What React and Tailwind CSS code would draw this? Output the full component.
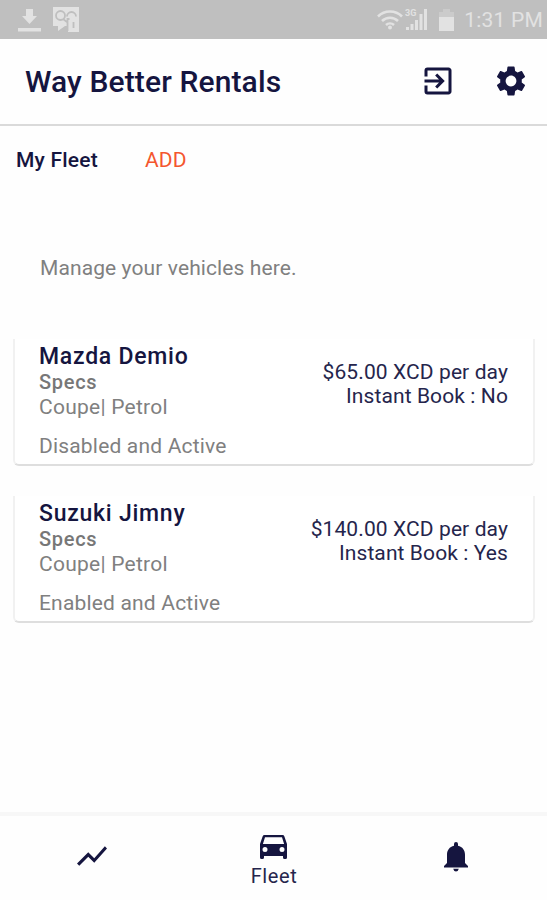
import { MdExitToApp, MdSettings, MdShowChart } from "react-icons/md";

const vehicles = [
  { name: "Mazda Demio", specs: "Coupe| Petrol", status: "Disabled and Active", price: "$65.00 XCD per day", instant: "No" },
  { name: "Suzuki Jimny", specs: "Coupe| Petrol", status: "Enabled and Active", price: "$140.00 XCD per day", instant: "Yes" },
];

function StatusBar() {
  return (
    <div className="flex h-[39px] shrink-0 items-center bg-[#bfbfbf] pl-[18px] pr-[4px] text-[#e2e2e2]">
      <svg className="h-6 w-[23px]" viewBox="0 0 23 24" fill="currentColor">
        <path d="M8 1h7v7h4l-7.500 8L4 8h4zM0 20h23v3.500H0z" />
      </svg>
      <svg className="ml-3 h-[25px] w-[26px]" viewBox="0 0 26 25" fill="currentColor">
        <path d="M0 0h26v25H15v-6h-3l-7 5v-5H0z" />
        <g fill="none" stroke="#bfbfbf" strokeWidth="1.800">
          <circle cx="7.500" cy="8.500" r="4.500" />
          <path d="M14 9.500a4.500 4.500 0 0 1 9 0M10 12l4 3M14.500 24V12h2M20.500 15v6" />
        </g>
      </svg>
      <div className="ml-auto flex items-center">
        <svg className="h-[20px] w-[26px]" viewBox="0 0 26 20" fill="none" stroke="currentColor" strokeWidth="2.600">
          <path d="M1 6.500a17 17 0 0 1 24 0M5 11a11.500 11.500 0 0 1 16 0M9 15a6 6 0 0 1 8 0" />
          <circle cx="13" cy="17.500" r="2" fill="currentColor" stroke="none" />
        </svg>
        <svg className="ml-[2px] h-[23px] w-[23px]" viewBox="0 0 23 23" fill="currentColor">
          <path d="M1 19h3v3H1zM5.500 16h3v6h-3zM10 12h3v10h-3zM14.500 6h3v16h-3zM19 1h3v21h-3z" />
          <text x="0" y="8" fontSize="9" fontWeight="700" fontFamily="Roboto, sans-serif">3G</text>
        </svg>
        <svg className="ml-[11px] h-[22px] w-[15px]" viewBox="0 0 15 22">
          <path fill="#cbcbcb" d="M0 3h4V0h7v3h4v7H0z" />
          <path fill="currentColor" d="M0 8h15v14H0z" />
        </svg>
        <span className="ml-[10px] whitespace-nowrap pt-[2px] text-[21px] leading-none tracking-[0.2px]">1:31 PM</span>
      </div>
    </div>
  );
}

function CarIcon() {
  return (
    <svg className="h-6 w-[27px]" viewBox="0 0 27 24" fill="currentColor">
      <path
        fillRule="evenodd"
        d="M4.500 0h18q1.400 0 1.900 1.400L27 9v13.500q0 1.500-1.500 1.500h-1q-1.500 0-1.500-1.500V21H4v1.500Q4 24 2.500 24h-1Q0 24 0 22.500V9l2.600-7.600Q3.100 0 4.500 0zM5 2.300 2.900 9h21.200L22 2.300zM5 12a2.500 2.500 0 1 0 0 5 2.500 2.500 0 1 0 0-5zM22 12a2.500 2.500 0 1 0 0 5 2.500 2.500 0 1 0 0-5z"
      />
    </svg>
  );
}

function BellIcon() {
  return (
    <svg className="h-[30px] w-6" viewBox="0 0 24 30" fill="currentColor">
      <path d="M12 0q2 0 2 2v1.700c4.500 1 7 4.500 7 9V21l3 3v1.500H0V24l3-3v-8.300c0-4.500 2.500-8 7-9V2q0-2 2-2zM9.200 26.800h5.600q-.6 2.700-2.800 2.700t-2.800-2.700z" />
    </svg>
  );
}

function VehicleCard({ name, specs, status, price, instant }) {
  return (
    <article className="flex h-[127px] justify-between rounded-b-[6px] border-x-2 border-b-2 border-x-[#f1f1f1] border-b-[#dedede] bg-white pl-[24px] pr-[25px]">
      <div className="whitespace-nowrap text-[21px] leading-[25px] text-[#808080]">
        <h2 className="pt-[5px] text-[23px] font-medium leading-[26px] tracking-[0.75px] text-[#15153f]">{name}</h2>
        <p className="text-[20px] font-medium tracking-[0.7px] text-[#777]">Specs</p>
        <p className="tracking-[0.25px]">{specs}</p>
        <p className="mt-[14px] tracking-[0.18px]">{status}</p>
      </div>
      <div className="whitespace-nowrap pt-[21px] text-right text-[21px] leading-[25px] tracking-[0.1px] text-[#25254c]">
        <p>{price}</p>
        <p className="-mt-px">Instant Book : {instant}</p>
      </div>
    </article>
  );
}

export default function App() {
  return (
    <div className="flex h-[900px] w-[547px] flex-col overflow-hidden bg-[#fefefe] font-[Roboto,sans-serif] text-[#15153f]">
      <StatusBar />
      <header className="flex h-[87px] shrink-0 items-center border-b-2 border-[#dadada] pl-[25px] pr-[18px]">
        <h1 className="whitespace-nowrap pt-px text-[30px] font-medium leading-none tracking-[0.12px]">Way Better Rentals</h1>
        <MdExitToApp className="-mt-px ml-auto size-9" />
        <MdSettings className="-mt-px ml-[37px] size-9" />
      </header>
      <main className="flex flex-1 flex-col">
        <div className="flex items-center gap-[47px] pl-4 pt-[22px] text-[21px] leading-[25px]">
          <span className="font-medium tracking-[0.2px]">My Fleet</span>
          <span className="tracking-[0.2px] text-[#f4562e]">ADD</span>
        </div>
        <p className="mt-[83px] pl-10 text-[21px] leading-[25px] tracking-[0.1px] text-[#808080]">Manage your vehicles here.</p>
        <div className="mt-[58px] flex flex-col gap-[30px] pl-[13px] pr-3">
          {vehicles.map((v) => (
            <VehicleCard key={v.name} {...v} />
          ))}
        </div>
      </main>
      <nav className="grid h-[88px] shrink-0 grid-cols-3 border-t-4 border-[#f7f7f7]">
        <div className="flex justify-center pl-px pt-[22px]">
          <MdShowChart className="size-9" />
        </div>
        <div className="flex flex-col items-center pl-px pt-[19px]">
          <CarIcon />
          <span className="mt-1 text-[20px] leading-[27px] tracking-[0.6px] text-[#25254c]">Fleet</span>
        </div>
        <div className="flex justify-center pt-[26px]">
          <BellIcon />
        </div>
      </nav>
    </div>
  );
}
